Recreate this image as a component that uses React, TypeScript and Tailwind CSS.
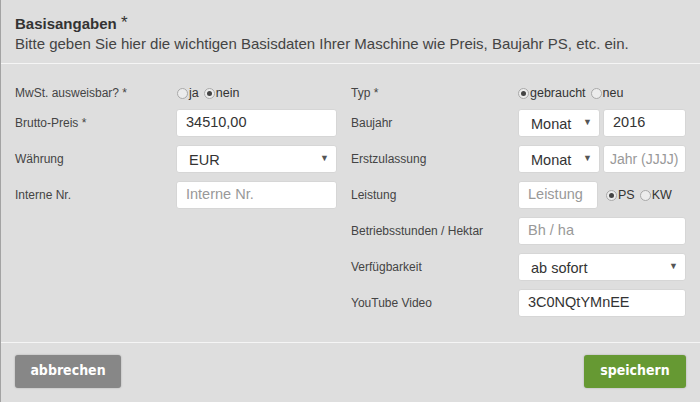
import type { ReactNode } from "react";

const font = { fontFamily: '"Liberation Sans", Arial, sans-serif' };
const btnFont = { fontFamily: '"DejaVu Sans Condensed", "DejaVu Sans", sans-serif', fontStretch: "condensed" };

function Radio({ label, checked }: { label: string; checked?: boolean }) {
  return (
    <span className="inline-flex items-center mr-[5px]">
      <span className="w-[11px] h-[11px] rounded-full border border-[#a9a9a9] bg-[#ececec] flex items-center justify-center">
        {checked && <span className="w-[5px] h-[5px] rounded-full bg-[#444]" />}
      </span>
      <span className="text-[12.5px] text-[#333] ml-[1px] leading-none">{label}</span>
    </span>
  );
}

function Input({ value, placeholder, className = "" }: { value?: string; placeholder?: string; className?: string }) {
  return (
    <div
      className={`h-[28px] bg-white border border-[#d6d6d6] rounded-[3px] px-[9px] flex items-center text-[14.5px] whitespace-nowrap overflow-hidden ${
        value ? "text-[#333]" : "text-[#999]"
      } ${className}`}
    >
      {value ?? placeholder}
    </div>
  );
}

function Select({ value, className = "" }: { value: string; className?: string }) {
  return (
    <div
      className={`relative h-[28px] bg-white border border-[#d6d6d6] rounded-[3px] pl-[12px] flex items-center text-[14.5px] text-[#333] pt-[3px] ${className}`}
    >
      {value}
      <span className="absolute right-[7px] top-[6px] text-[9px] text-[#555]">▼</span>
    </div>
  );
}

function Row({ label, children, first }: { label: string; children: ReactNode; first?: boolean }) {
  return (
    <div className={`flex ${first ? "h-[20px] mb-[6px] items-center" : "h-[28px] mb-2"}`}>
      <div className={`shrink-0 text-[12px] text-[#444] ${first ? "" : "pt-[5px]"} label-col`}>{label}</div>
      {children}
    </div>
  );
}

export default function App() {
  return (
    <div className="w-[700px] h-[402px] bg-[#dedede] border-l border-[#a3a3a3] overflow-hidden" style={font}>
      {/* header */}
      <div className="px-[14px] pt-[13px] pb-[9px] border-b border-[#f5f5f5]">
        <h2 className="text-[15px] font-bold text-[#333] leading-[20px]">
          Basisangaben <span className="font-normal text-[17px] align-[1px]">*</span>
        </h2>
        <p className="text-[15px] text-[#444] leading-[20px]">
          Bitte geben Sie hier die wichtigen Basisdaten Ihrer Maschine wie Preis, Baujahr PS, etc. ein.
        </p>
      </div>

      {/* form */}
      <div className="flex px-[14px] pt-[19px] pb-[17px] border-b border-[#f5f5f5]">
        <div className="w-[336px] shrink-0">
          <Row label="MwSt. ausweisbar? *" first>
            <div className="flex items-center pl-[1px]">
              <Radio label="ja" />
              <Radio label="nein" checked />
            </div>
          </Row>
          <Row label="Brutto-Preis *">
            <Input value="34510,00" className="w-[161px]" />
          </Row>
          <Row label="Währung">
            <Select value="EUR" className="w-[161px]" />
          </Row>
          <Row label="Interne Nr.">
            <Input placeholder="Interne Nr." className="w-[161px]" />
          </Row>
        </div>
        <div className="flex-1 right-col">
          <Row label="Typ *" first>
            <div className="flex items-center">
              <Radio label="gebraucht" checked />
              <Radio label="neu" />
            </div>
          </Row>
          <Row label="Baujahr">
            <div className="flex gap-[3px]">
              <Select value="Monat" className="w-[82px]" />
              <Input value="2016" className="w-[83px] px-[7px]" />
            </div>
          </Row>
          <Row label="Erstzulassung">
            <div className="flex gap-[3px]">
              <Select value="Monat" className="w-[82px]" />
              <Input placeholder="Jahr (JJJJ)" className="w-[83px] !px-[6px] !text-[14px]" />
            </div>
          </Row>
          <Row label="Leistung">
            <div className="flex items-center">
              <Input placeholder="Leistung" className="w-[80px] mr-[8px]" />
              <Radio label="PS" checked />
              <Radio label="KW" />
            </div>
          </Row>
          <Row label="Betriebsstunden / Hektar">
            <Input placeholder="Bh / ha" className="w-[168px]" />
          </Row>
          <Row label="Verfügbarkeit">
            <Select value="ab sofort" className="w-[168px]" />
          </Row>
          <Row label="YouTube Video">
            <Input value="3C0NQtYMnEE" className="w-[168px]" />
          </Row>
        </div>
      </div>

      {/* footer */}
      <div className="flex justify-between px-[14px] pt-[12px]">
        <button
          className="w-[106px] h-[33px] rounded-[3px] bg-[#878787] text-white text-[14px] font-bold pb-[2px] shadow-[0_0_2px_rgba(0,0,0,0.25)]"
          style={btnFont}
        >
          abbrechen
        </button>
        <button
          className="w-[102px] h-[33px] rounded-[3px] bg-[#669933] text-white text-[14px] font-bold pb-[2px] shadow-[0_0_2px_rgba(0,0,0,0.25)]"
          style={btnFont}
        >
          speichern
        </button>
      </div>

      <style>{`.label-col{width:161px}.right-col .label-col{width:167px}`}</style>
    </div>
  );
}
